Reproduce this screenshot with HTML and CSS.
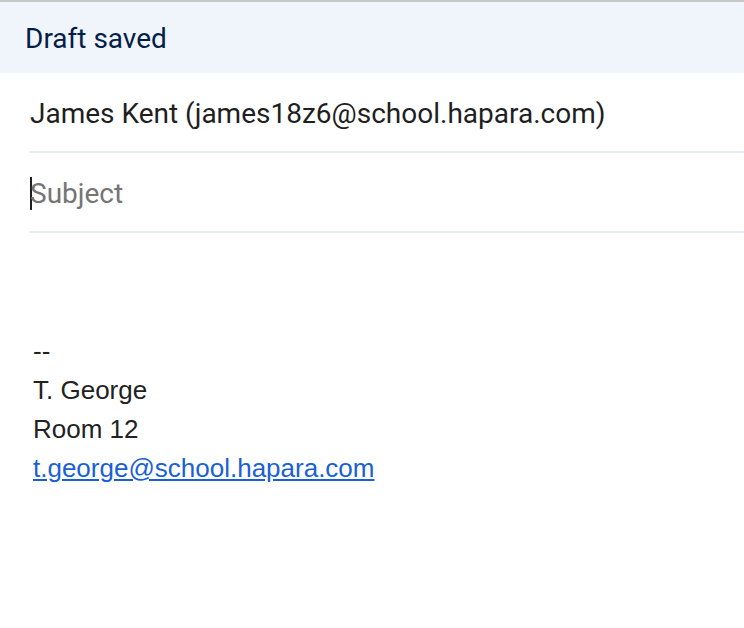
FILE: index.html
```html
<!DOCTYPE html>
<html>
<head>
<meta charset="utf-8">
<link rel="stylesheet" href="styles.css">
</head>
<body>
<div class="compose">
  <div class="header">Draft saved</div>
  <div class="fields">
    <div class="field to">James Kent (james18z6@school.hapara.com)</div>
    <div class="field subject"><span class="caret"></span><span class="placeholder">Subject</span></div>
  </div>
  <div class="body">
    <div class="line">--</div>
    <div class="line">T. George</div>
    <div class="line">Room 12</div>
    <div class="line"><a class="link" href="#">t.george@school.hapara.com</a></div>
  </div>
</div>
</body>
</html>
```
FILE: styles.css
```css
html, body {
  margin: 0;
  padding: 0;
  background: #ffffff;
}
.compose {
  width: 744px;
  height: 628px;
  overflow: hidden;
  border-top: 2px solid #c7c7c7;
  box-sizing: border-box;
}
.header {
  height: 71px;
  background: #f0f4fb;
  color: #041e49;
  font-family: Roboto, "Open Sans", sans-serif;
  font-size: 28px;
  line-height: 74px;
  padding-left: 25px;
}
.fields {
  padding-left: 30px;
}
.field {
  height: 78px;
  padding-top: 2px;
  box-sizing: content-box;
  border-bottom: 2px solid #e9ecef;
  display: flex;
  align-items: center;
  font-family: Roboto, "Open Sans", sans-serif;
  font-size: 28px;
  color: #1f1f1f;
}
.field.to {
  height: 76px;
}
.subject {
  height: 76px;
}
.caret {
  width: 2px;
  height: 33px;
  background: #1f1f1f;
  margin-right: -2px;
}
.placeholder {
  color: #757575;
}
.body {
  padding: 99px 0 0 33px;
  font-family: "Liberation Sans", Arial, sans-serif;
  font-size: 26px;
  line-height: 39px;
  color: #222222;
}
.link {
  color: #1a5fd6;
  text-decoration: underline;
}
```
